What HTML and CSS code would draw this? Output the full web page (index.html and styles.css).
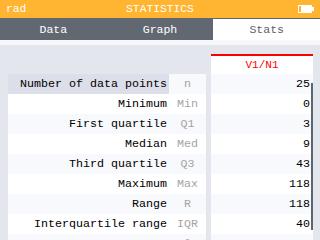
FILE: index.html
```html
<!DOCTYPE html>
<html lang="en">
<head>
    <meta charset="UTF-8">
    <title>Statistics</title>
    <link rel="stylesheet" href="styles.css">
</head>
<body>
    <!-- Title bar -->
    <div class="top-bar">
        <span class="angle">rad</span>
        <span class="title">STATISTICS</span>
        <span class="battery">
            <svg width="16" height="8" viewBox="0 0 16 8">
                <rect x="0.5" y="0.5" width="13" height="7" fill="none" stroke="#fff"/>
                <rect x="3" y="1" width="10" height="6" fill="#fff"/>
                <rect x="14" y="2" width="2" height="4" fill="#fff"/>
            </svg>
        </span>
    </div>

    <!-- Tabs -->
    <div class="tabs">
        <div class="tab">Data</div>
        <div class="tab">Graph</div>
        <div class="tab active">Stats</div>
    </div>

    <!-- Stats table -->
    <div class="content">
        <div class="table">
            <div class="head-row">
                <div class="head-cell">V1/N1</div>
            </div>
            <div class="row odd selected">
                <div class="label">Number of data points</div>
                <div class="symbol">n</div>
                <div class="spacer"></div>
                <div class="value">25</div>
            </div>
            <div class="row">
                <div class="label">Minimum</div>
                <div class="symbol">Min</div>
                <div class="spacer"></div>
                <div class="value">0</div>
            </div>
            <div class="row odd">
                <div class="label">First quartile</div>
                <div class="symbol">Q1</div>
                <div class="spacer"></div>
                <div class="value">3</div>
            </div>
            <div class="row">
                <div class="label">Median</div>
                <div class="symbol">Med</div>
                <div class="spacer"></div>
                <div class="value">9</div>
            </div>
            <div class="row odd">
                <div class="label">Third quartile</div>
                <div class="symbol">Q3</div>
                <div class="spacer"></div>
                <div class="value">43</div>
            </div>
            <div class="row">
                <div class="label">Maximum</div>
                <div class="symbol">Max</div>
                <div class="spacer"></div>
                <div class="value">118</div>
            </div>
            <div class="row odd">
                <div class="label">Range</div>
                <div class="symbol">R</div>
                <div class="spacer"></div>
                <div class="value">118</div>
            </div>
            <div class="row">
                <div class="label">Interquartile range</div>
                <div class="symbol">IQR</div>
                <div class="spacer"></div>
                <div class="value">40</div>
            </div>
            <div class="row odd">
                <div class="label">Mean</div>
                <div class="symbol">x̄</div>
                <div class="spacer"></div>
                <div class="value">25.48</div>
            </div>
            <div class="scrollbar"></div>
        </div>
    </div>
</body>
</html>
```

FILE: styles.css
```css
body {
    margin: 0;
    width: 320px;
    height: 240px;
    overflow: hidden;
    font-family: "Liberation Mono", "DejaVu Sans Mono", monospace;
    background-color: #e4e6ee;
}
.top-bar {
    height: 18px;
    background: #ffb531;
    color: #ffffff;
    font-size: 11.3px;
    display: grid;
    grid-template-columns: 1fr auto 1fr;
    align-items: center;
    padding: 0 6px;
}
.top-bar .battery {
    justify-self: end;
    display: flex;
}
.tabs {
    height: 22px;
    display: flex;
    background: #626872;
}
.tab {
    flex: 1;
    display: flex;
    justify-content: center;
    align-items: center;
    color: #ffffff;
    font-size: 11.5px;
}
.tab.active {
    background: #ffffff;
    color: #5c6068;
    margin-top: 1px;
}
.content {
    border-top: 5px solid #f8f8fa;
    padding: 9px 0 0 8px;
}
.table {
    position: relative;
    width: 305px;
}
.head-row {
    display: flex;
    padding-left: 203px;
}
.head-cell {
    width: 102px;
    height: 18px;
    border-top: 2px solid #ff0000;
    background: #ffffff;
    color: #ff0000;
    font-size: 11px;
    text-align: center;
    line-height: 18px;
}
.row {
    display: grid;
    grid-template-columns: 161px 37px 5px 102px;
    height: 20px;
    line-height: 20px;
    font-size: 11.67px;
}
.label, .symbol, .value {
    background: #ffffff;
}
.row.odd .label, .row.odd .symbol, .row.odd .value {
    background: #f7f9fd;
}
.row.selected .label {
    background: #dcdee9;
}
.label {
    text-align: right;
    padding-right: 2px;
    color: #000000;
}
.symbol {
    text-align: center;
    color: #a4a4a4;
}
.value {
    text-align: right;
    padding-right: 3px;
    color: #000000;
}
.scrollbar {
    position: absolute;
    right: 0;
    top: 29px;
    width: 2px;
    height: 147px;
    background: #5f636a;
}
```
